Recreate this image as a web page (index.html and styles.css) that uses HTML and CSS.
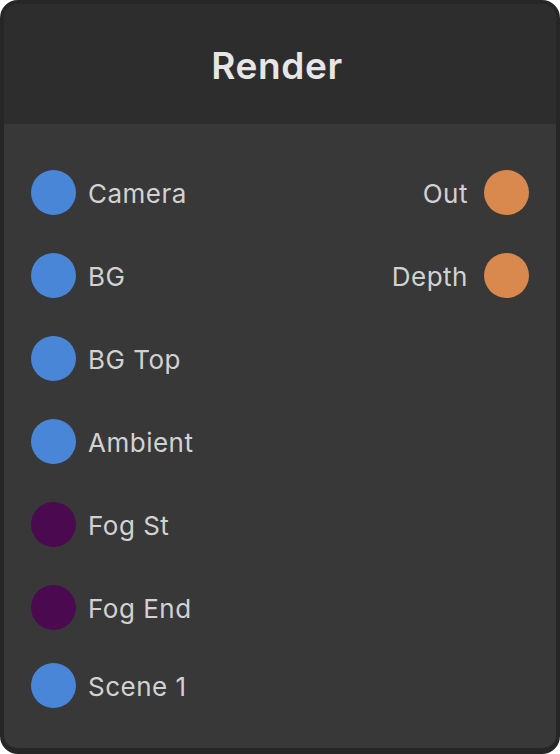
FILE: index.html
```html
<!DOCTYPE html>
<html lang="en">
<head>
    <meta charset="UTF-8">
    <meta name="viewport" content="width=device-width, initial-scale=1.0">
    <title>Render Node</title>
    <link rel="stylesheet" href="styles.css">
</head>
<body>
    <div class="node">
        <div class="node-header">Render</div>
        <div class="node-body">
            <div class="sockets inputs">
                <div class="socket"><span class="dot blue"></span><span class="label">Camera</span></div>
                <div class="socket"><span class="dot blue"></span><span class="label">BG</span></div>
                <div class="socket"><span class="dot blue"></span><span class="label">BG Top</span></div>
                <div class="socket"><span class="dot blue"></span><span class="label">Ambient</span></div>
                <div class="socket"><span class="dot purple"></span><span class="label">Fog St</span></div>
                <div class="socket"><span class="dot purple"></span><span class="label">Fog End</span></div>
                <div class="socket scene"><span class="dot blue"></span><span class="label">Scene 1</span></div>
            </div>
            <div class="sockets outputs">
                <div class="socket"><span class="label">Out</span><span class="dot orange"></span></div>
                <div class="socket"><span class="label">Depth</span><span class="dot orange"></span></div>
            </div>
        </div>
    </div>
</body>
</html>
```

FILE: styles.css
```css
body {
    margin: 0;
    padding: 0;
    background-color: #ffffff;
    font-family: Inter, "Noto Sans", sans-serif;
}

/* Node card */
.node {
    width: 560px;
    height: 754px;
    box-sizing: border-box;
    border: 4px solid #262626;
    border-bottom-width: 6px;
    border-radius: 18px;
    background-color: #383838;
    overflow: hidden;
    display: flex;
    flex-direction: column;
}

.node-header {
    height: 120px;
    box-sizing: border-box;
    padding: 4px 6px 0 0;
    line-height: 116px;
    background-color: #2d2d2d;
    color: #e6e6e6;
    font-size: 37px;
    font-weight: 600;
    letter-spacing: 0.6px;
    text-align: center;
}

.node-body {
    flex: 1;
    display: flex;
    justify-content: space-between;
    align-items: flex-start;
    padding: 46px 27px 0 27px;
}

.sockets {
    display: flex;
    flex-direction: column;
    gap: 38px;
}

.socket {
    display: flex;
    align-items: center;
    gap: 12px;
    height: 45px;
}

.socket.scene {
    margin-top: -5px;
}

.outputs .socket {
    justify-content: flex-end;
    gap: 16px;
}

.label {
    color: #d2d2d2;
    font-size: 26px;
    letter-spacing: 0.5px;
    padding-top: 2px;
}

.dot {
    width: 45px;
    height: 45px;
    border-radius: 50%;
    flex-shrink: 0;
}

.dot.blue {
    background-color: #4a86d8;
}

.dot.purple {
    background-color: #4b0a4f;
}

.dot.orange {
    background-color: #d9884e;
}
```
